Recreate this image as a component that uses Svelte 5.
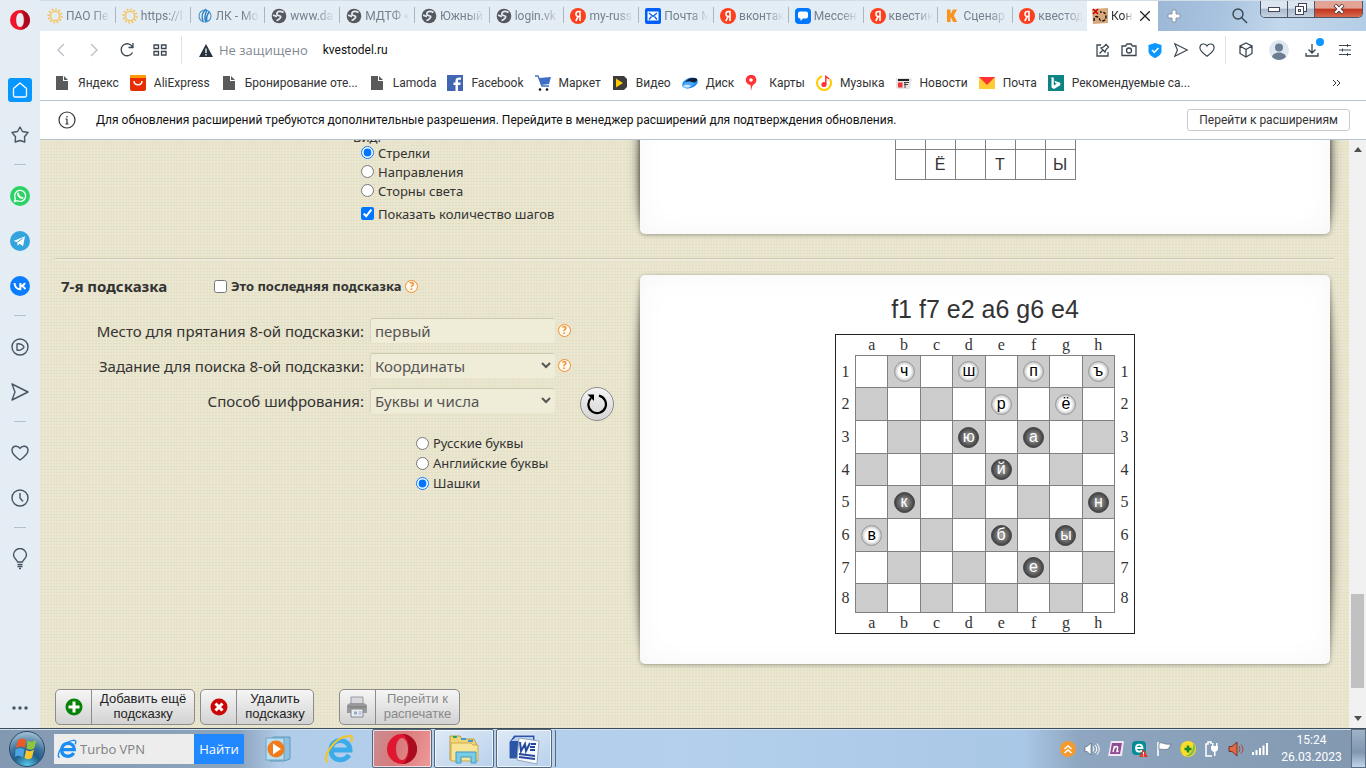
<script>
  const tabs = [
    { icon: "sun", title: "ПАО Пе" },
    { icon: "sun", title: "https://l" },
    { icon: "drop", title: "ЛК - Мо" },
    { icon: "globe", title: "www.da" },
    { icon: "globe", title: "МДТФ «" },
    { icon: "globe", title: "Южный" },
    { icon: "globe", title: "login.vk" },
    { icon: "ya", title: "my-russ" },
    { icon: "mail", title: "Почта M" },
    { icon: "ya", title: "вконтак" },
    { icon: "chat", title: "Мессен" },
    { icon: "ya", title: "квестик" },
    { icon: "k", title: "Сценар" },
    { icon: "ya", title: "квестод" },
  ];

  const bookmarks = [
    { icon: "doc", title: "Яндекс" },
    { icon: "ali", title: "AliExpress" },
    { icon: "doc", title: "Бронирование оте..." },
    { icon: "doc", title: "Lamoda" },
    { icon: "fb", title: "Facebook" },
    { icon: "cart", title: "Маркет" },
    { icon: "video", title: "Видео" },
    { icon: "disk", title: "Диск" },
    { icon: "pin", title: "Карты" },
    { icon: "music", title: "Музыка" },
    { icon: "news", title: "Новости" },
    { icon: "envelope", title: "Почта" },
    { icon: "bing", title: "Рекомендуемые са..." },
  ];

  const sidebar = [
    "home", "star", "-", "whatsapp", "telegram", "vk", "-",
    "player", "send", "-", "heart", "clock", "-", "bulb",
  ];

  const tray = ["up", "sound", "note", "eset", "flag", "plus", "plug", "speaker", "signal"];

  const cols = ["a", "b", "c", "d", "e", "f", "g", "h"];
  const rows = [1, 2, 3, 4, 5, 6, 7, 8];
  const pieces = {
    b1: { letter: "ч" },
    d1: { letter: "ш" },
    f1: { letter: "п" },
    h1: { letter: "ъ" },
    e2: { letter: "р" },
    g2: { letter: "ё" },
    d3: { letter: "ю", dark: true },
    f3: { letter: "а", dark: true },
    e4: { letter: "й", dark: true },
    b5: { letter: "к", dark: true },
    h5: { letter: "н", dark: true },
    a6: { letter: "в" },
    e6: { letter: "б", dark: true },
    g6: { letter: "ы", dark: true },
    f7: { letter: "е", dark: true },
  };
  const word = ["", "Ё", "", "Т", "", "Ы"];

  let view = $state("arrows");
  let showSteps = $state(true);
  let isLast = $state(false);
  let place = $state("первый");
  let task = $state("Координаты");
  let method = $state("Буквы и числа");
  let alphabet = $state("checkers");
  let search = $state("");
</script>

{#snippet icon(name)}
  {#if name === "sun"}
    <svg width="16" height="16" viewBox="0 0 16 16" fill="none" stroke="#f5c35c">
      <circle cx="8" cy="8" r="4.6" stroke-width="1.4" />
      <circle cx="8" cy="8" r="6.6" stroke-width="2" stroke-dasharray="1.7 1.75" />
    </svg>
  {:else if name === "drop"}
    <svg width="16" height="16" viewBox="0 0 16 16">
      <circle cx="8" cy="8" r="6" fill="none" stroke="#4a9ad0" stroke-width="1.2" />
      <path d="M9 1C5 5 4 8 6 13M10 2c-2 4-3 8-1 12M12 4c-2 3-3 6-2 9" fill="none" stroke="#2a7fc0" stroke-width="1.4" />
    </svg>
  {:else if name === "globe"}
    <svg width="16" height="16" viewBox="0 0 16 16">
      <circle cx="8" cy="8" r="7.3" fill="#55585c" />
      <path d="M12.500 4.500C10 3 7 3 6 5s1 2.500 3 3-1 4-3.500 4.500M2 7.500c2-.5 2.500 1 4 1" fill="none" stroke="#e4ecf4" stroke-width="1.7" />
    </svg>
  {:else if name === "ya"}
    <svg width="16" height="16" viewBox="0 0 16 16">
      <circle cx="8" cy="8" r="8" fill="#fc3f1d" />
      <path d="M10 13V3.500H8.500C5.200 3.500 5.200 8.500 8.300 8.500H10M8.200 8.500L5.800 13" fill="none" stroke="#fff" stroke-width="1.6" />
    </svg>
  {:else if name === "mail"}
    <svg width="16" height="16" viewBox="0 0 16 16">
      <rect width="16" height="16" rx="2" fill="#005ff9" />
      <rect x="2.500" y="3.500" width="11" height="9" fill="#fff" />
      <path d="M4 5l4 3.500L12 5M4 11.500l2.500-3M12 11.500l-2.500-3" fill="none" stroke="#005ff9" stroke-width="1.3" />
    </svg>
  {:else if name === "chat"}
    <svg width="16" height="16" viewBox="0 0 16 16">
      <rect width="16" height="16" rx="4" fill="#0077ff" />
      <path d="M5 3.500h6a2 2 0 0 1 2 2v3a2 2 0 0 1-2 2H8L5.500 13v-2.500H5a2 2 0 0 1-2-2v-3a2 2 0 0 1 2-2z" fill="#fff" />
    </svg>
  {:else if name === "k"}
    <svg width="16" height="16" viewBox="0 0 16 16">
      <path d="M3 1.500h3.500v4.800L9 1.500h4L9.800 7.500l3.400 6.500H9.200L6.500 9v5H3z" fill="#f7931e" />
    </svg>
  {:else if name === "map"}
    <svg width="16" height="16" viewBox="0 0 16 16">
      <path d="M0 1l16-1v15l-15 1z" fill="#d9a87c" />
      <path d="M1 1l5 5M6 1L1 6" stroke="#d00000" stroke-width="1.600" />
      <path d="M2 13c0-5 2-5 4-4s1 4 4 4 4-2 4-5-2-4-6-4" fill="none" stroke="#111" stroke-width="1.400" stroke-dasharray="3 1.500" />
    </svg>
  {:else if name === "doc"}
    <svg width="16" height="16" viewBox="0 0 16 16">
      <path d="M2 1h7v5h5v9H2zM10 1l4 4h-4z" fill="#5a5a5a" />
    </svg>
  {:else if name === "ali"}
    <svg width="16" height="16" viewBox="0 0 16 16">
      <rect width="16" height="16" rx="2" fill="#e62e04" />
      <path d="M0 3V2a2 2 0 0 1 2-2h12a2 2 0 0 1 2 2v1z" fill="#ff9a00" />
      <path d="M4 6c0 5 8 5 8 0" fill="none" stroke="#fff" stroke-width="1.400" />
    </svg>
  {:else if name === "fb"}
    <svg width="16" height="16" viewBox="0 0 16 16">
      <rect width="16" height="16" fill="#4267b2" />
      <path d="M11 16V10h2.300l.4-2.500H11V6c0-.9.400-1.300 1.400-1.300H14V2.500C10.500 2 8.500 3 8.500 5.700v1.800H6.500V10h2v6z" fill="#fff" />
    </svg>
  {:else if name === "cart"}
    <svg width="16" height="16" viewBox="0 0 16 16">
      <path d="M0 1h3l4 10h7" fill="none" stroke="#3d6fc4" stroke-width="1.300" />
      <path d="M4 3l12-1-2 7-8 1z" fill="#3d6fc4" />
      <circle cx="5" cy="14.500" r="1.300" fill="#111" /><circle cx="12" cy="14.500" r="1.300" fill="#111" />
    </svg>
  {:else if name === "video"}
    <svg width="16" height="16" viewBox="0 0 16 16">
      <path d="M1 1h11l3 3v8l-3 3H1z" fill="#3c3c3c" /><path d="M4 3.500l7 4.500-7 4.500z" fill="#fc0" />
    </svg>
  {:else if name === "disk"}
    <svg width="16" height="16" viewBox="0 0 16 16">
      <ellipse cx="8" cy="8" rx="8" ry="5" transform="rotate(-20 8 8)" fill="#1b86ee" />
      <ellipse cx="9.500" cy="6" rx="6" ry="2.600" transform="rotate(-15 9 6)" fill="#111e38" />
      <path d="M0 11c3-6 8-5 13-3-3 5-10 7-13 3z" fill="#4aa8fa" />
      <path d="M1 11c3-2 6-1 8 0-2 2-6 2-8 0z" fill="#c9e6ff" />
    </svg>
  {:else if name === "pin"}
    <svg width="16" height="16" viewBox="0 0 16 16">
      <path d="M6 0a5 5 0 0 1 2.500 9.500C7 11 6.500 13 6 16c-.5-2 0-4-.5-6A5 5 0 0 1 6 0z" fill="#f33" /><circle cx="6" cy="5" r="1.800" fill="#fff" />
    </svg>
  {:else if name === "music"}
    <svg width="16" height="16" viewBox="0 0 16 16">
      <path d="M6 1.300a7 7 0 1 0 8 3" fill="none" stroke="#fc0" stroke-width="2" />
      <circle cx="8" cy="9.500" r="2.600" fill="#f33" /><path d="M9.800 9V1.500l3.500 2.500" fill="none" stroke="#f33" stroke-width="1.500" />
    </svg>
  {:else if name === "news"}
    <svg width="16" height="16" viewBox="0 0 16 16">
      <path d="M0 3h14l2 1-2 10H2L0 13z" fill="#e4e4e4" />
      <path d="M2 4h11v2H2z" fill="#222" /><path d="M2 7.500h4.500v5H2z" fill="#e33" /><path d="M8 7.500h5M8 9.500h4M9 7v6" stroke="#444" />
    </svg>
  {:else if name === "envelope"}
    <svg width="16" height="16" viewBox="0 0 16 16">
      <path d="M0 2h16v12H0z" fill="#fc3" /><path d="M0 2h16l-8 8z" fill="#f33" />
    </svg>
  {:else if name === "bing"}
    <svg width="16" height="16" viewBox="0 0 16 16">
      <rect width="16" height="16" fill="#0c8484" /><path d="M3.500 2l2.300.8v7.700l3-1.700-1.500-.7-1-2.300 6 2v2.500L6 14l-2.500-1.500z" fill="#fff" />
    </svg>
  {:else if name === "home"}
    <svg width="24" height="24" viewBox="0 0 24 24">
      <rect width="24" height="24" rx="3" fill="#0797ff" />
      <path d="M5.500 10.500L12 5l6.500 5.500v7a1.500 1.500 0 0 1-1.500 1.500H7a1.500 1.500 0 0 1-1.500-1.500z" fill="none" stroke="#fff" stroke-width="1.300" stroke-linejoin="round" />
    </svg>
  {:else if name === "star"}
    <svg class="line" width="18" height="18" viewBox="0 0 18 18"><path d="M9 1l2.500 4.500 5.500 1-3.500 4.200.3 5.300L9 14.500 4.200 16l.3-5.300L1 6.500l5.500-1z" /></svg>
  {:else if name === "whatsapp"}
    <svg width="20" height="20" viewBox="0 0 20 20">
      <circle cx="10" cy="10" r="10" fill="#2bd366" />
      <path d="M4.500 15.500l.8-3A5.500 5.500 0 1 1 7.500 14.700z" fill="none" stroke="#fff" stroke-width="1.300" />
      <path d="M8 7.500c0 2 2 4.500 4.500 4.500" fill="none" stroke="#fff" stroke-width="2" stroke-linecap="round" />
    </svg>
  {:else if name === "telegram"}
    <svg width="20" height="20" viewBox="0 0 20 20">
      <circle cx="10" cy="10" r="10" fill="#33a4dd" /><path d="M3.500 10L15 5.200l-2 10-3.500-2.500-2 2-.3-3.500z" fill="#fff" /><path d="M7.200 11.300l5.500-4" stroke="#33a4dd" />
    </svg>
  {:else if name === "vk"}
    <svg width="20" height="20" viewBox="0 0 20 20">
      <circle cx="10" cy="10" r="10" fill="#0a7cff" />
      <path d="M4.500 7c.3 4 2.300 6.200 5.800 6.200V7M15 7c-.8 1.600-2.300 2.700-4.500 2.900 2.500.2 4 1.400 4.800 3.300" fill="none" stroke="#fff" stroke-width="1.900" />
    </svg>
  {:else if name === "player"}
    <svg class="line" width="18" height="18" viewBox="0 0 18 18"><circle cx="9" cy="9" r="8" /><path d="M6 6c3-1 6 1 7 3-1 2-4 4-7 3z" /></svg>
  {:else if name === "send"}
    <svg class="line" width="18" height="18" viewBox="0 0 18 18"><path d="M1 1l16 8-16 8 3-8z" /></svg>
  {:else if name === "heart"}
    <svg class="line" width="18" height="18" viewBox="0 0 18 18"><path d="M9 16C4 12.500 1 10 1 6.500 1 1.500 7 1 9 4.500 11 1 17 1.500 17 6.500 17 10 14 12.500 9 16z" /></svg>
  {:else if name === "clock"}
    <svg class="line" width="18" height="18" viewBox="0 0 18 18"><circle cx="9" cy="9" r="8" /><path d="M9 4v5l3 3.500" /></svg>
  {:else if name === "bulb"}
    <svg class="line" width="18" height="22" viewBox="0 0 18 22"><path d="M6.500 14c0-2-4-3.500-4-7a6.500 6.500 0 0 1 13 0c0 3.500-4 5-4 7zM6.500 16.500h5M6.500 18.500h5M8 20.500h2" /></svg>
  {:else if name === "up"}
    <svg width="16" height="16" viewBox="0 0 16 16"><circle cx="8" cy="8" r="8" fill="#f59a2e" /><path d="M4.500 8L8 5l3.500 3M4.500 12L8 9l3.500 3" fill="none" stroke="#fff" stroke-width="1.600" /></svg>
  {:else if name === "sound"}
    <svg width="16" height="16" viewBox="0 0 16 16"><path d="M1 5.500h2L7 2v12l-4-3.500H1z" fill="#fff" stroke="#44566a" stroke-width=".6" /><path d="M9 5.500q2 2.500 0 5M11 4q3.500 4 0 8M13 2.500q4.500 5.500 0 11" fill="none" stroke="#fff" /></svg>
  {:else if name === "note"}
    <svg width="16" height="16" viewBox="0 0 16 16"><path d="M3 0h13l-2 15H0z" fill="#f3e7f5" /><path d="M4 2h10l-2 11H2z" fill="#8f4d96" /><path d="M5 11l1.500-6M5.800 8c1-3 4.500-3.500 3.700-.5L9 10.500l1.500-.500" fill="none" stroke="#fff" stroke-width="1.400" /></svg>
  {:else if name === "eset"}
    <svg width="16" height="16" viewBox="0 0 16 16"><rect width="14" height="14" rx="4" fill="#078c95" /><path d="M4 7h6.500c0-4.500-6.500-4.500-6.500 0s4 4 6 2.500" fill="none" stroke="#fff" stroke-width="1.800" /><path d="M11.500 8L16 16H7z" fill="#e03a2c" /><path d="M11.500 11v2.500M11.500 14.300v1" stroke="#fff" /></svg>
  {:else if name === "flag"}
    <svg width="16" height="16" viewBox="0 0 16 16"><path d="M2 1v14" stroke="#fff" stroke-width="1.600" /><path d="M3 2c4-1 5 2 12 1-2 4-2 5-5 5.500-3 .5-4-1-7 0z" fill="#fff" stroke="#5b6c80" stroke-width=".7" /></svg>
  {:else if name === "plus"}
    <svg width="16" height="16" viewBox="0 0 16 16"><circle cx="8" cy="8" r="8" fill="#fbdc2a" /><path d="M2 3a8 8 0 0 0 1 11 9 9 0 0 1-1-11z" fill="#2fa036" /><path d="M13 2a8 8 0 0 1-8 13c5-1 9-6 8-13z" fill="#82c341" /><path d="M8 4.500v7M4.500 8h7" stroke="#128a2a" stroke-width="2.500" /></svg>
  {:else if name === "plug"}
    <svg width="16" height="16" viewBox="0 0 16 16"><path d="M7 3V1H4v2H2v12h6" fill="none" stroke="#fff" stroke-width="1.500" /><path d="M7 5h7v3q-1 3-3.500 3T7 8zM8 2h1.500v3H8zM12 2h1.500v3H12zM10 10h1.500v5H10z" fill="#fff" /></svg>
  {:else if name === "speaker"}
    <svg width="16" height="16" viewBox="0 0 16 16"><path d="M1 5.500h3L9 1v14l-5-4.500H1z" fill="#e06a45" stroke="#6b2313" stroke-width=".8" /><path d="M11 5q2 3 0 6M13 3.500q4 4.500 0 9" fill="none" stroke="#b5452a" /></svg>
  {:else if name === "signal"}
    <svg width="16" height="16" viewBox="0 0 16 16"><path d="M0 11h2v3H0zM3.500 9h2v5h-2zM7 7h2v7H7zM10.500 4.500h2V14h-2zM14 2h2v12h-2z" fill="#fff" /></svg>
  {/if}
{/snippet}

{#snippet help()}
  <button class="help" aria-label="Справка">?</button>
{/snippet}

{#snippet ieLogo(size, ring)}
  <svg width={size} height={size} viewBox="0 0 30 30" fill="none">
    <path d="M7 16h19C26 4 7 3 7 16c0 12 14 12 18 5" stroke={ring ? "#3cabea" : "#1b8cf2"} stroke-width="5" />
    <path d="M4 28C-3 25 9 4 24 2c5-1 5 3 3 6" stroke={ring ? "#f5c422" : "#1b8cf2"} stroke-width="2" />
  </svg>
{/snippet}

<div class="screen">
  <div class="browser">
    <nav class="sidebar">
      <div class="opera">
        <svg width="20" height="20" viewBox="0 0 20 20">
          <path d="M10 0a10 10 0 1 0 0 20 10 10 0 0 0 0-20zm0 3c2.500 0 3.800 3 3.800 7s-1.300 7-3.800 7-3.800-3-3.800-7S7.500 3 10 3z" fill="#f0142d" fill-rule="evenodd" />
          <path d="M10 0a10 10 0 0 1 0 20c6-2 6-18 0-20z" fill="#a90b1d" />
        </svg>
      </div>
      {#each sidebar as item}
        {#if item === "-"}
          <hr />
        {:else}
          <button class="slot" aria-label={item}>{@render icon(item)}</button>
        {/if}
      {/each}
      <button class="dots" aria-label="Ещё">
        <svg width="16" height="4" viewBox="0 0 16 4" fill="#4a5563"><circle cx="2" cy="2" r="1.700" /><circle cx="8" cy="2" r="1.700" /><circle cx="14" cy="2" r="1.700" /></svg>
      </button>
    </nav>

    <div class="window">
      <div class="tabstrip">
        <div class="tabs">
          {#each tabs as tab}
            <button class="tab">
              {@render icon(tab.icon)}
              <span>{tab.title}</span>
            </button>
          {/each}
        </div>
        <div class="tab-active">
          {@render icon("map")}
          <span>Кон</span>
          <svg width="10" height="10" viewBox="0 0 10 10" stroke="#222" stroke-width="1.300"><path d="M0 0l10 10M10 0L0 10" /></svg>
        </div>
        <div class="glass">
          <button class="newtab" aria-label="Новая вкладка">
            <svg width="14" height="14" viewBox="0 0 14 14"><path d="M5 1h4v4h4v4H9v4H5V9H1V5h4z" fill="#fff" stroke="#8396ab" /></svg>
          </button>
          <button class="find" aria-label="Поиск">
            <svg width="16" height="16" viewBox="0 0 16 16" fill="none" stroke="#3b4650" stroke-width="1.400"><circle cx="6" cy="6" r="5" /><path d="M9.500 9.500l5.500 5.500" /></svg>
          </button>
          <div class="controls">
            <button aria-label="Свернуть"><svg width="12" height="5"><rect x=".5" y=".5" width="11" height="4" fill="#fff" stroke="#445" /></svg></button>
            <button aria-label="Развернуть"><svg width="12" height="12" fill="#fff" stroke="#445"><rect x="3.500" y=".5" width="8" height="8" /><rect x=".5" y="3.500" width="8" height="8" /><rect x="3.500" y="6.500" width="2" height="2" /></svg></button>
            <button class="close" aria-label="Закрыть"><svg width="12" height="10" viewBox="0 0 14 12"><path d="M2 1l10 10M12 1L2 11" stroke="#4a3338" stroke-width="4.500" /><path d="M2.500 1.500l9 9M11.500 1.500l-9 9" stroke="#fff" stroke-width="2.600" /></svg></button>
          </div>
        </div>
      </div>

      <div class="toolbar">
        <button aria-label="Назад"><svg width="16" height="16" viewBox="0 0 16 16" class="faint"><path d="M11 2L5 8l6 6" /></svg></button>
        <button aria-label="Вперёд"><svg width="16" height="16" viewBox="0 0 16 16" class="faint"><path d="M5 2l6 6-6 6" /></svg></button>
        <button aria-label="Обновить"><svg width="16" height="16" viewBox="0 0 16 16" class="dark"><path d="M13.500 10.500A6 6 0 1 1 13.500 5M14 1v4.500H9.500" /></svg></button>
        <button aria-label="Экспресс-панель"><svg width="14" height="12" viewBox="0 0 14 12" class="dark"><path d="M1 1h4.500v3.500H1zM8.500 1H13v3.500H8.500zM1 7.500h4.500V11H1zM8.500 7.500H13V11H8.500z" /></svg></button>
        <i class="bar"></i>
        <div class="address">
          <svg width="14" height="13" viewBox="0 0 14 13"><path d="M7 0l7 13H0z" fill="#26323d" /><path d="M7 4.500v4.500M7 10v1.500" stroke="#fff" stroke-width="1.300" /></svg>
          <span class="insecure">Не защищено</span>
          <span class="url">kvestodel.ru</span>
        </div>
        <div class="actions">
          <button aria-label="Закрепить"><svg width="16" height="16" viewBox="0 0 16 16" class="dark"><path d="M6 3H2v11h11v-4M4.500 11.500L8 8M6 6l4 4 1-2.500L13.500 5 11 2.500 8.500 5z" /></svg></button>
          <button aria-label="Снимок"><svg width="16" height="16" viewBox="0 0 16 16" class="dark"><path d="M1 4h3.500L6 2h4l1.500 2H15v9.500H1z" /><circle cx="8" cy="8.500" r="2.500" /></svg></button>
          <button aria-label="Защита"><svg width="14" height="15" viewBox="0 0 14 15"><path d="M7 0l6.500 2v6c0 3.500-3 5.500-6.500 7-3.500-1.500-6.500-3.500-6.500-7V2z" fill="#0a97ff" /><path d="M4 7l2.300 2.300L10.500 5" fill="none" stroke="#fff" stroke-width="1.600" /></svg></button>
          <button aria-label="Отправить"><svg width="16" height="16" viewBox="0 0 18 18" class="dark"><path d="M2 2l14 7-14 7 3-7z" /></svg></button>
          <button aria-label="В избранное"><svg width="16" height="16" viewBox="0 0 18 18" class="dark"><path d="M9 16C4 12.500 1 10 1 6.500 1 1.500 7 1 9 4.500 11 1 17 1.500 17 6.500 17 10 14 12.500 9 16z" /></svg></button>
        </div>
        <i class="bar"></i>
        <div class="extras">
          <button aria-label="Расширения"><svg width="16" height="16" viewBox="0 0 16 16" class="dark"><path d="M8 1l6 3v7.500L8 15l-6-3.500V4zM2 4l6 3.500L14 4M8 7.500V15" /></svg></button>
          <button aria-label="Профиль"><svg width="20" height="20" viewBox="0 0 20 20"><circle cx="10" cy="10" r="10" fill="#dfe8f0" /><circle cx="10" cy="7.500" r="4" fill="#6b7d92" /><path d="M3 17c1-6 13-6 14 0-4 4-10 4-14 0z" fill="#6b7d92" /></svg></button>
          <button class="download" aria-label="Загрузки"><svg width="16" height="16" viewBox="0 0 16 16" class="dark"><path d="M8 2v8.500M4.500 7.500L8 11l3.500-3.500M2 11v3h12v-3" /></svg></button>
          <button aria-label="Настройки"><svg width="14" height="14" viewBox="0 0 14 14" class="dark thin"><path d="M1 2.500h12M1 7h12M1 11.500h12M9.500 1v3M4.500 5.500v3M9.500 10v3" /></svg></button>
        </div>
      </div>

      <div class="bookmarks">
        {#each bookmarks as mark}
          <a href="#{mark.icon}">{@render icon(mark.icon)}{mark.title}</a>
        {/each}
        <button class="more" aria-label="Ещё закладки"><svg width="9" height="8" viewBox="0 0 9 8" fill="none" stroke="#333"><path d="M1 1l3 3-3 3M5 1l3 3-3 3" /></svg></button>
      </div>

      <div class="notice">
        <svg width="18" height="18" viewBox="0 0 18 18" fill="none" stroke="#333" stroke-width="1.200"><circle cx="9" cy="9" r="8" /><path d="M9 8v5M9 5v1.500M7.500 8H9M7.500 13h3" /></svg>
        <p>Для обновления расширений требуются дополнительные разрешения. Перейдите в менеджер расширений для подтверждения обновления.</p>
        <button>Перейти к расширениям</button>
      </div>

      <div class="viewport">
        <main class="page">
          <section class="hint clipped">
            <div class="form view-form">
              <div class="caption">Вид:</div>
              <label><input type="radio" name="view" value="arrows" bind:group={view} />Стрелки</label>
              <label><input type="radio" name="view" value="ways" bind:group={view} />Направления</label>
              <label><input type="radio" name="view" value="world" bind:group={view} />Сторны света</label>
              <label class="steps"><input type="checkbox" bind:checked={showSteps} />Показать количество шагов</label>
            </div>
            <div class="card">
              <table class="word">
                <tbody>
                  <tr>{#each word as _}<td></td>{/each}</tr>
                  <tr>{#each word as letter}<td>{letter}</td>{/each}</tr>
                </tbody>
              </table>
            </div>
          </section>

          <section class="hint">
            <div class="form">
              <div class="title">
                <h2>7-я подсказка</h2>
                <label><input type="checkbox" bind:checked={isLast} />Это последняя подсказка</label>
                {@render help()}
              </div>
              <div class="fields">
                <label for="place">Место для прятания 8-ой подсказки:</label>
                <input id="place" type="text" bind:value={place} />
                {@render help()}
                <label for="task">Задание для поиска 8-ой подсказки:</label>
                <select id="task" bind:value={task}><option>Координаты</option></select>
                {@render help()}
                <label for="method">Способ шифрования:</label>
                <select id="method" bind:value={method}><option>Буквы и числа</option></select>
                <button class="refresh" aria-label="Обновить шифр">
                  <svg width="22" height="22" viewBox="0 0 22 22"><path d="M13 2.700A8.800 8.800 0 1 1 5 5" fill="none" stroke="#000" stroke-width="2.200" /><path d="M1.500 1.500H8V8z" fill="#000" /></svg>
                </button>
              </div>
              <div class="alphabet">
                <label><input type="radio" name="abc" value="ru" bind:group={alphabet} />Русские буквы</label>
                <label><input type="radio" name="abc" value="en" bind:group={alphabet} />Английские буквы</label>
                <label><input type="radio" name="abc" value="checkers" bind:group={alphabet} />Шашки</label>
              </div>
            </div>
            <div class="card">
              <p class="cipher">f1 f7 e2 a6 g6 e4</p>
              <table class="board">
                <thead>
                  <tr><th class="edge"></th>{#each cols as col}<th>{col}</th>{/each}<th class="edge"></th></tr>
                </thead>
                <tbody>
                  {#each rows as row}
                    <tr>
                      <th>{row}</th>
                      {#each cols as col, i}
                        {@const piece = pieces[col + row]}
                        <td class:black={(i + row) % 2 === 0}>
                          {#if piece}<span class="piece" class:dark={piece.dark}>{piece.letter}</span>{/if}
                        </td>
                      {/each}
                      <th>{row}</th>
                    </tr>
                  {/each}
                </tbody>
                <tfoot>
                  <tr><th></th>{#each cols as col}<th>{col}</th>{/each}<th></th></tr>
                </tfoot>
              </table>
            </div>
          </section>

          <div class="buttons">
            <button>
              <span class="pic"><svg width="18" height="18" viewBox="0 0 18 18"><circle cx="9" cy="9" r="8.500" fill="#078307" /><path d="M9 3.500v11M3.500 9h11" stroke="#fff" stroke-width="3" /></svg></span>
              <span class="text">Добавить ещё<br />подсказку</span>
            </button>
            <button>
              <span class="pic"><svg width="18" height="18" viewBox="0 0 18 18"><circle cx="9" cy="9" r="8.500" fill="#cc0606" /><path d="M5.500 5.500l7 7M12.500 5.500l-7 7" stroke="#fff" stroke-width="3" /></svg></span>
              <span class="text">Удалить<br />подсказку</span>
            </button>
            <button class="print" disabled>
              <span class="pic"><svg width="22" height="22" viewBox="0 0 22 22"><path d="M5 1h12v8H5z" fill="#d6d8de" stroke="#999" /><path d="M1 9l3-2h14l3 2v8H1z" fill="#9a9a9c" /><path d="M2 11h18" stroke="#777" /><path d="M5 13h12v8H5z" fill="#eceef3" stroke="#888" /><path d="M8 15.500h3v3H8z" fill="#91a8ca" /><path d="M12.500 16h3M12.500 18h3" stroke="#91a8ca" /></svg></span>
              <span class="text">Перейти к<br />распечатке</span>
            </button>
          </div>
        </main>
        <div class="scrollbar">
          <svg width="8" height="5" viewBox="0 0 8 5"><path d="M0 5l4-5 4 5z" fill="#505050" /></svg>
          <div class="track"><div class="thumb"></div></div>
          <svg width="8" height="5" viewBox="0 0 8 5"><path d="M0 0l4 5 4-5z" fill="#505050" /></svg>
        </div>
      </div>
    </div>
  </div>

  <footer class="taskbar">
    <button class="start" aria-label="Пуск">
      <svg width="38" height="38" viewBox="0 0 38 38">
        <defs>
          <radialGradient id="orb" cx=".5" cy="1" r="1"><stop offset="0" stop-color="#5bd2ee" /><stop offset=".4" stop-color="#1f5d8a" /><stop offset=".6" stop-color="#3b719a" /><stop offset="1" stop-color="#a8c4d8" /></radialGradient>
        </defs>
        <circle cx="19" cy="19" r="17.500" fill="url(#orb)" stroke="#284a68" />
        <path d="M10 10q4-3 8 0l-1 8q-4-3-9 0z" fill="#ea5b26" />
        <path d="M19.500 10.500q4 2.500 9-.5l-2 8q-4 3-8 .5z" fill="#8cc63e" />
        <path d="M7.500 19.500q5-3 9 0l-1.500 8q-4-3-8-.5z" fill="#4ba5e4" />
        <path d="M18 20q4 2.500 8-.5l-2 8q-3 3-7.500.5z" fill="#fcc52c" />
      </svg>
    </button>
    <form class="search">
      <label for="search">{@render ieLogo(20, false)}</label>
      <input id="search" type="text" placeholder="Turbo VPN" bind:value={search} />
      <button type="button">Найти</button>
    </form>
    <div class="apps">
      <button class="app player" aria-label="Проигрыватель">
        <svg width="28" height="26" viewBox="0 0 28 26"><path d="M8 1h17v22l-6 2H5z" fill="#8fc0dd" stroke="#5c98bd" /><path d="M1 2h18v22H1z" fill="#b9dff0" stroke="#6ca5c4" /><circle cx="11" cy="13" r="8.500" fill="#f27a1a" /><path d="M8 7.500l8 5.500-8 5.500z" fill="#fff" /></svg>
      </button>
      <button class="app" aria-label="Internet Explorer">{@render ieLogo(30, true)}</button>
      <button class="app open red" aria-label="Opera">
        <svg width="32" height="32" viewBox="0 0 32 32"><path d="M16 1a15 15 0 1 0 0 30 15 15 0 0 0 0-30zm0 4c3.500 0 6 5 6 11s-2.500 11-6 11-6-5-6-11 2.500-11 6-11z" fill="#df1730" fill-rule="evenodd" /><path d="M16 1a15 15 0 0 1 0 30c9-3 9-27 0-30z" fill="#a90b1f" /></svg>
      </button>
      <button class="app open" aria-label="Проводник">
        <svg width="32" height="32" viewBox="0 0 32 32"><path d="M2 3h10l2 3h12l2 4v17H2z" fill="#f2d675" stroke="#ba9a43" /><path d="M5 4h4M13 6h5M20 8h5" stroke="#3c9adb" stroke-width="2" /><path d="M5 4h3" stroke="#28a64a" stroke-width="2" /><path d="M3 10h20l2 2h5v16H3z" fill="#f8e497" stroke="#ccab4e" /><path d="M8 30V19h20v11h-5v-6H13v6z" fill="#79cbe6" stroke="#3c9cc2" /></svg>
      </button>
      <button class="app open word-app" aria-label="Word">
        <svg width="32" height="32" viewBox="0 0 32 32"><path d="M6 2h21v24H1V9z" fill="#2b56a8" stroke="#dbe6f7" /><path d="M8 4h17v4H3z" fill="#b8cdf0" /><path d="M11 5l20 3-2 23-20-4z" fill="#f7f9fc" stroke="#96a6be" /><path d="M12 9l1 9 4-7 1 7 4-8M23 11h5M22 14h5M22 17h5M11 21l16 2M11 24l16 2" fill="none" stroke="#2649a0" stroke-width="2" /></svg>
      </button>
    </div>
    <div class="tray">
      {#each tray as item}
        <button aria-label={item}>{@render icon(item)}</button>
      {/each}
    </div>
    <div class="time">15:24<br />26.03.2023</div>
    <button class="desktop" aria-label="Свернуть все окна"></button>
  </footer>
</div>

<style>
  :global(body) {
    margin: 0;
    overflow: hidden;
  }
  .screen {
    display: flex;
    flex-direction: column;
    height: 100vh;
    font-family: Roboto, "Open Sans", sans-serif;
    font-size: 12px;
    color: #333;
  }
  .screen *,
  .screen *::before {
    box-sizing: border-box;
  }
  button {
    font: inherit;
    color: inherit;
    background: none;
    border: 0;
    padding: 0;
  }
  svg {
    display: block;
    flex-shrink: 0;
  }
  input {
    font: inherit;
    margin: 0;
  }
  .browser {
    flex: 1;
    display: flex;
    min-height: 0;
  }

  /* left panel */
  .sidebar {
    width: 40px;
    flex-shrink: 0;
    display: flex;
    flex-direction: column;
    align-items: center;
    background: #e4ecf4;
  }
  .opera {
    height: 67px;
    padding-top: 10px;
  }
  .slot {
    display: flex;
    align-items: center;
    justify-content: center;
    width: 40px;
    height: 45px;
  }
  .sidebar hr {
    width: 12px;
    height: 1px;
    margin: 7px 0 8px;
    border: 0;
    background: #b3c1cf;
  }
  .line {
    fill: none;
    stroke: #4a5563;
    stroke-width: 1.4;
    stroke-linejoin: round;
  }
  .dots {
    display: flex;
    align-items: center;
    height: 40px;
    margin-top: auto;
  }
  .window {
    flex: 1;
    min-width: 0;
    display: flex;
    flex-direction: column;
    background: #fff;
  }

  /* tabs */
  .tabstrip {
    display: flex;
    height: 31px;
    background: #e4ecf4;
    border-top: 1px solid #d3dde7;
  }
  .tabs {
    flex: 1;
    min-width: 0;
    display: flex;
  }
  .tab {
    position: relative;
    flex: 1 1 0;
    min-width: 0;
    display: flex;
    align-items: center;
    gap: 3px;
    padding: 0 4px 0 7px;
    color: #74808d;
  }
  .tab + .tab::before {
    content: "";
    position: absolute;
    left: 0;
    top: 6px;
    width: 1px;
    height: 16px;
    background: #a9b6c3;
  }
  .tab span,
  .tab-active span {
    flex: 1;
    text-align: left;
    white-space: nowrap;
    overflow: hidden;
    mask-image: linear-gradient(to right, #000 60%, transparent);
  }
  .tab-active {
    width: 71px;
    display: flex;
    align-items: center;
    gap: 3px;
    padding: 0 8px 0 5px;
    background: #fff;
  }
  .tab-active svg:last-child {
    margin-left: 4px;
  }
  .glass {
    display: flex;
    align-items: center;
    width: 208px;
    background: linear-gradient(100deg, #9cb8d6, #a8c3df 30%, #c3d8ec 60%, #b4cde6);
  }
  .newtab {
    margin-left: 9px;
  }
  .find {
    margin-left: auto;
    margin-right: 12px;
  }
  .controls {
    display: flex;
    align-self: flex-start;
    height: 17px;
    margin-right: 3px;
    border: 1px solid #4b5868;
    border-top: 0;
    border-radius: 0 0 5px 5px;
    overflow: hidden;
  }
  .controls button {
    display: flex;
    align-items: center;
    justify-content: center;
    width: 27px;
    border-right: 1px solid #4b5868;
    background: linear-gradient(#dce6f0 45%, #a9b9cc 50%, #c5d3e2);
  }
  .controls .close {
    width: 47px;
    border: 0;
    background: linear-gradient(#e2a394 45%, #c0331b 50%, #d8694e);
  }

  /* address line */
  .toolbar {
    display: flex;
    align-items: center;
    height: 39px;
    padding: 0 5px 1px 4px;
  }
  .toolbar button {
    display: flex;
    align-items: center;
    justify-content: center;
    width: 33px;
    height: 30px;
  }
  .dark {
    fill: none;
    stroke: #3b4650;
    stroke-width: 1.3;
  }
  .thin {
    stroke-width: 1;
  }
  .faint {
    fill: none;
    stroke: #b9bfc6;
    stroke-width: 1.3;
  }
  .bar {
    width: 1px;
    height: 28px;
    margin: 0 3px 0 5px;
    background: #dde2e8;
  }
  .address {
    flex: 1;
    display: flex;
    align-items: center;
    gap: 6px;
    padding-left: 14px;
  }
  .insecure {
    font: 13px "Open Sans", sans-serif;
    color: #808891;
  }
  .url {
    margin-left: 9px;
    color: #111;
  }
  .actions {
    display: flex;
  }
  .toolbar .actions button {
    width: 26px;
  }
  .extras {
    display: flex;
  }
  .download {
    position: relative;
  }
  .download::after {
    content: "";
    position: absolute;
    right: 4px;
    top: 3px;
    width: 8px;
    height: 8px;
    border-radius: 50%;
    background: #0a97ff;
  }
  .bookmarks {
    display: flex;
    align-items: center;
    gap: 11px;
    height: 31px;
    padding: 0 25px 5px 14px;
    border-bottom: 1px solid #b6c3d1;
  }
  .bookmarks a {
    display: flex;
    align-items: center;
    gap: 8px;
    color: #333;
    text-decoration: none;
    white-space: nowrap;
  }
  .more {
    margin-left: auto;
  }
  .notice {
    display: flex;
    align-items: center;
    gap: 20px;
    height: 39px;
    padding: 0 16px 0 18px;
    border-bottom: 1px solid #b6c3d1;
  }
  .notice p {
    flex: 1;
    margin: 0;
    color: #111;
    white-space: nowrap;
  }
  .notice button {
    height: 22px;
    padding: 0 11px;
    border: 1px solid #c6cbd0;
    border-radius: 3px;
    white-space: nowrap;
  }

  /* site */
  .viewport {
    flex: 1;
    min-height: 0;
    display: flex;
  }
  .page {
    flex: 1;
    min-width: 0;
    display: flex;
    flex-direction: column;
    padding: 0 15px;
    overflow: hidden;
    isolation: isolate;
    font-family: "Noto Sans", sans-serif;
    background:
      repeating-linear-gradient(0deg, rgba(200, 180, 120, 0.1) 0 1px, transparent 1px 3px),
      repeating-linear-gradient(90deg, rgba(255, 255, 255, 0.15) 0 1px, transparent 1px 3px),
      #e8e4cd;
  }
  .hint {
    display: flex;
    padding-top: 16px;
  }
  .hint.clipped {
    height: 119px;
    flex-shrink: 0;
    align-items: flex-end;
    padding: 0 0 24px;
    border-bottom: 1px solid #cbc7b2;
    box-shadow: 0 1px 0 #f3f0e0;
  }
  .form {
    width: 585px;
    flex-shrink: 0;
    font-size: 13px;
  }
  .form label {
    display: flex;
    align-items: center;
    gap: 4px;
  }
  .view-form {
    padding: 0 0 11px 298px;
  }
  .view-form label {
    height: 19px;
    padding-left: 8px;
  }
  .caption {
    line-height: 12px;
  }
  .view-form .steps {
    margin-top: 4px;
  }
  .card {
    position: relative;
    flex: 1;
    margin-right: 4px;
    padding: 18px 0 30px;
    border-radius: 5px;
    background: #fff;
    box-shadow:
      0 1px 4px rgba(0, 0, 0, 0.3),
      inset 0 0 30px rgba(0, 0, 0, 0.04);
  }
  .card::before {
    content: "";
    position: absolute;
    z-index: -1;
    top: 10px;
    bottom: 10px;
    left: 0;
    right: 0;
    border-radius: 10px / 100px;
    box-shadow: 0 0 12px rgba(0, 0, 0, 0.8);
  }
  .clipped .card {
    padding: 20px 0 54px;
  }
  .word {
    margin: 0 auto;
    border-collapse: collapse;
    font: 16px/20px "Liberation Sans", Arial, sans-serif;
  }
  .word td {
    width: 30px;
    height: 30px;
    padding: 0;
    text-align: center;
    border: 1px solid #808080;
  }
  .title {
    display: flex;
    align-items: center;
    height: 22px;
    padding-left: 6px;
    font-weight: bold;
  }
  .title h2 {
    width: 153px;
    margin: 0;
    font-size: 15px;
  }
  .help {
    width: 13px;
    height: 13px;
    margin-left: 4px;
    border: 1px solid #f28c28;
    border-radius: 50%;
    background: #fffaf0;
    color: #f28c28;
    font-size: 10px;
    font-weight: bold;
    line-height: 11px;
  }
  .fields {
    display: grid;
    grid-template-columns: 309px 185px 50px;
    grid-auto-rows: 25px;
    gap: 10px 6px;
    align-items: center;
    margin-top: 21px;
  }
  .fields label {
    justify-content: flex-end;
    font-size: 15px;
  }
  .fields input,
  .fields select {
    width: 100%;
    height: 25px;
    border: 1px solid #f0ecd8;
    border-top-color: #cdc9b0;
    border-left-color: #d8d4bd;
    border-radius: 3px;
    background-color: #efecd7;
    font: 15px "Noto Sans", sans-serif;
    color: #555;
  }
  .fields input {
    padding: 0 4px;
  }
  .fields select {
    padding: 0;
  }
  .fields .help {
    margin: 0 0 1px -3px;
  }
  .refresh {
    display: flex;
    align-items: center;
    justify-content: center;
    width: 34px;
    height: 34px;
    margin: 6px 0 0 19px;
    border: 1px solid #8c8c8c;
    border-radius: 50%;
    background: linear-gradient(#f4f4f4, #d4d4d4);
  }
  .alphabet {
    padding: 20px 0 0 361px;
  }
  .alphabet label {
    height: 20px;
  }
  .cipher {
    margin: 0;
    font: 25px/32px "Liberation Sans", Arial, sans-serif;
    text-align: center;
  }
  .board {
    width: 300px;
    margin: 9px auto 0;
    border: 1px solid #222;
    border-collapse: collapse;
    table-layout: fixed;
    font: 16px/18px "Liberation Serif", serif;
  }
  .board th {
    height: 21px;
    padding: 0;
    font-weight: normal;
  }
  .board .edge {
    width: 20px;
  }
  .board td {
    height: 33px;
    padding: 0;
    border: 1px solid #808080;
  }
  .board tr:nth-child(3n + 1) td {
    height: 32px;
  }
  .board tr:last-child td {
    height: 29px;
  }
  .board .black {
    background: #ccc;
  }
  .piece {
    display: block;
    width: 21px;
    height: 21px;
    margin: 0 auto;
    border: 1px solid #999;
    border-radius: 50%;
    background: radial-gradient(#fff 45%, #bbb 75%);
    color: #000;
    font: 16px/18px "Liberation Sans", Arial, sans-serif;
    text-align: center;
  }
  .piece.dark {
    border-color: #444;
    background: radial-gradient(#aaa, #444 70%);
    color: #fff;
  }
  .buttons {
    display: flex;
    gap: 5px;
    margin-top: auto;
    padding: 0 0 3px;
    font: 13px/15px "Liberation Sans", Arial, sans-serif;
  }
  .buttons button {
    display: flex;
    border: 1px solid #8c8c8c;
    border-radius: 5px;
    background: linear-gradient(#f6f6f6, #d2d2d2);
    color: #222;
  }
  .buttons .print {
    margin-left: 20px;
    color: #888;
  }
  .pic {
    display: flex;
    align-items: center;
    justify-content: center;
    width: 36px;
    border-right: 1px solid #8c8c8c;
  }
  .text {
    padding: 1px 8px 3px;
  }
  .scrollbar {
    width: 17px;
    display: flex;
    flex-direction: column;
    align-items: center;
    padding: 7px 0;
    background: #f1f1f1;
  }
  .track {
    flex: 1;
    display: flex;
    flex-direction: column;
    justify-content: flex-end;
    padding-bottom: 28px;
  }
  .thumb {
    width: 13px;
    height: 94px;
    background: #c1c1c1;
  }

  /* taskbar */
  .taskbar {
    display: flex;
    align-items: center;
    height: 40px;
    flex-shrink: 0;
    border-top: 1px solid #3e4d5a;
    box-shadow: inset 0 1px 0 #cfe0f0;
    background: linear-gradient(to right, #8399b1, #8da4bd 240px, #b2cdea 280px, #b4d0ed 50%, #a9c7e6 75%, #8ea6bf 79%, #8298b1);
  }
  .start {
    margin: 0 8px;
  }
  .search {
    display: flex;
    height: 30px;
    background: #ededed;
    font-family: "Open Sans", sans-serif;
    font-size: 13px;
  }
  .search label {
    display: flex;
    align-items: center;
    padding-left: 3px;
  }
  .search input {
    width: 117px;
    padding: 0 3px;
    border: 0;
    background: none;
  }
  .search input::placeholder {
    color: #808080;
  }
  .search button {
    width: 50px;
    background: #2188ff;
    color: #fff;
  }
  .apps {
    flex: 1;
    display: flex;
    height: 100%;
    gap: 2px;
  }
  .app {
    display: flex;
    align-items: center;
    justify-content: center;
    width: 62px;
  }
  .app.player {
    padding-left: 8px;
  }
  .app.open {
    width: 60px;
    border: 1px solid #54697e;
    border-radius: 2px;
    box-shadow: inset 0 0 0 1px rgba(255, 255, 255, 0.7);
    background: linear-gradient(150deg, #dfeaf6, #b8d1ec);
  }
  .app.red {
    background: linear-gradient(110deg, #c78f92, #d87a7c 45%, #f09a9a);
  }
  .app.word-app {
    width: 56px;
    box-shadow:
      inset 0 0 0 1px rgba(255, 255, 255, 0.7),
      4px 0 0 -1px #b8d1ec,
      5px 0 0 -1px #54697e;
  }
  .tray {
    display: flex;
  }
  .tray button {
    display: flex;
    justify-content: center;
    width: 24px;
  }
  .time {
    width: 79px;
    font-size: 12px;
    line-height: 17px;
    text-align: center;
    color: #fff;
  }
  .desktop {
    width: 15px;
    height: 100%;
    border: 1px solid #5c6f83;
    background: linear-gradient(#9fb2c7, #8097b0 60%, #c0d5ea);
  }
</style>
